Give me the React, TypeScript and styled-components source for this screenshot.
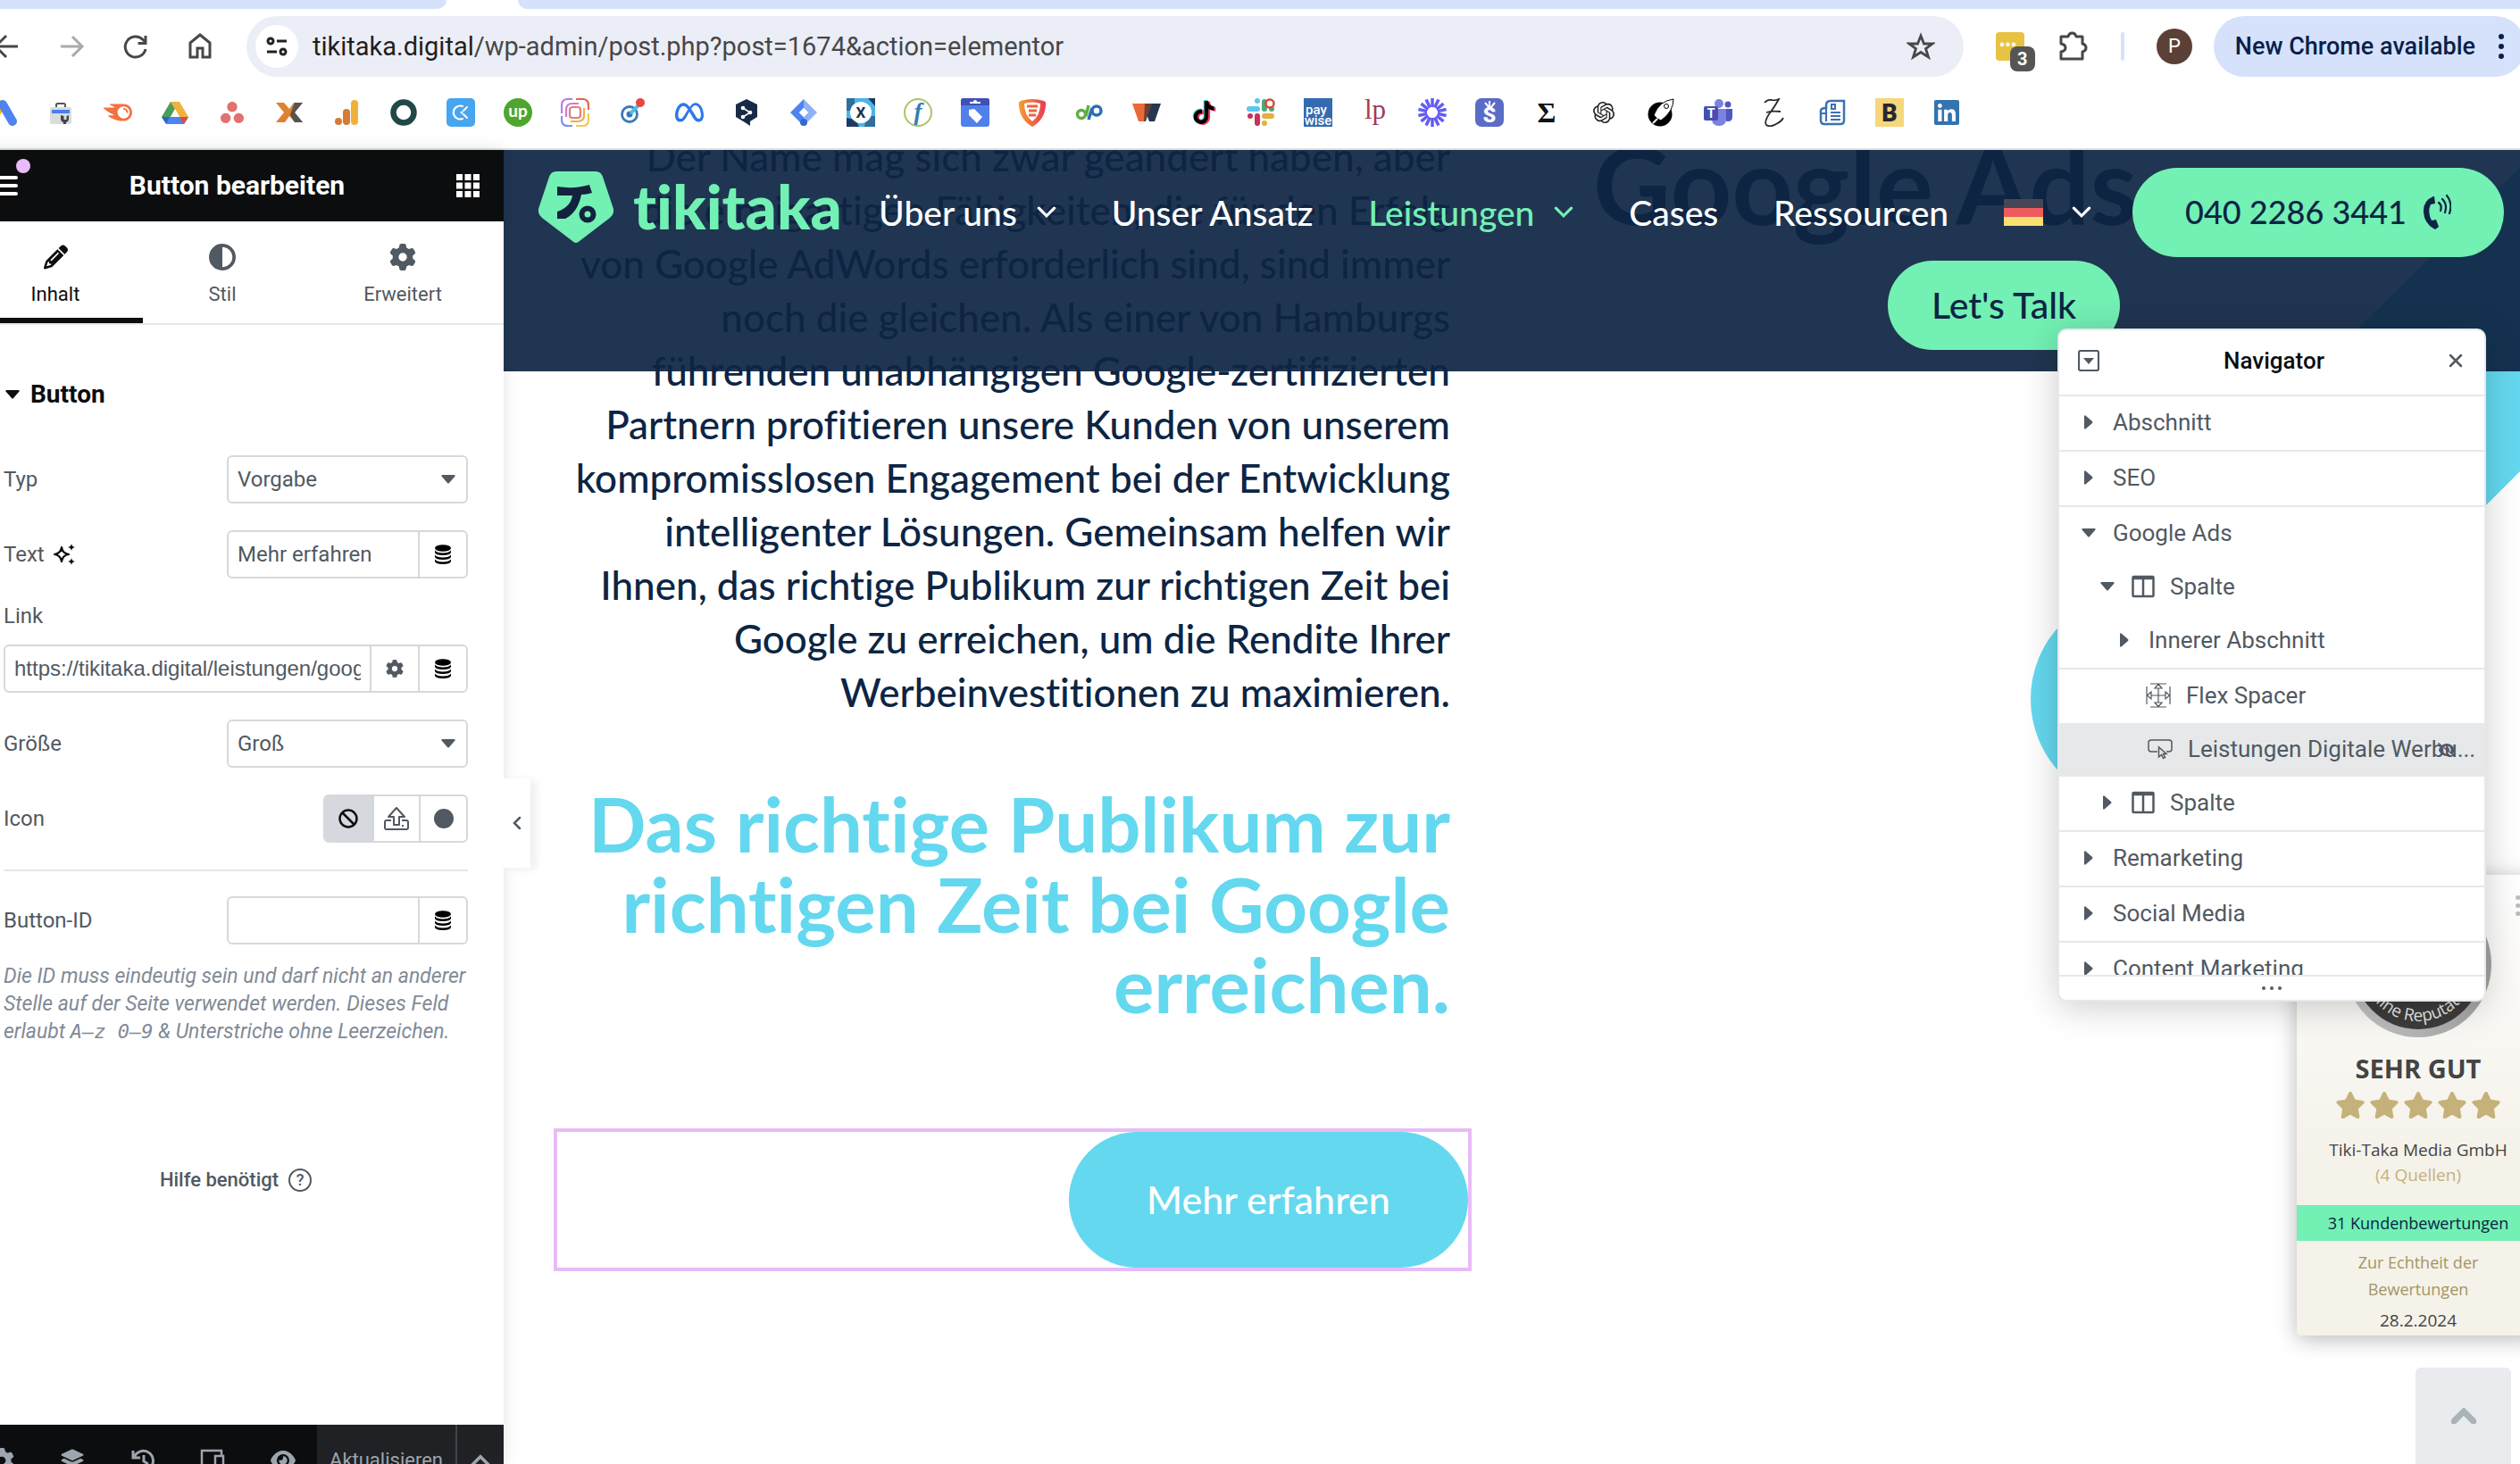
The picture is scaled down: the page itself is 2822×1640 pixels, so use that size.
import React from "react";
import styled, { createGlobalStyle, css } from "styled-components";
import {
  FaPencil, FaCircleHalfStroke, FaGear, FaLayerGroup,
  FaEye, FaEyeSlash, FaStar, FaTiktok, FaLinkedin, FaMeta,
} from "react-icons/fa6";
import { SiSemrush, SiAsana, SiOpenai } from "react-icons/si";

const ui = `Roboto, "Liberation Sans", sans-serif`;
const brand = `Lato, "Liberation Sans", sans-serif`;
const navy = "#0c2544";
const mint = "#73f0b4";
const cyan = "#64d8ef";
const slate = "#515962";
const line = "#d5d8dc";

const Global = createGlobalStyle`
  * { box-sizing: border-box; }
  html, body { margin: 0; padding: 0; background: #fff; overflow: hidden; }
  button, input, select { font: inherit; color: inherit; margin: 0; }
  button { border: 0; padding: 0; background: none; cursor: pointer; }
  a { color: inherit; text-decoration: none; }
  svg { display: block; flex: none; }
`;

const Window = styled.div`
  display: flex;
  flex-direction: column;
  height: 100vh;
  overflow: hidden;
`;

/* ---------- browser chrome ---------- */

const BrowserTop = styled.header`
  flex: none;
  font-family: ${ui};
  border-bottom: 2px solid #e1e3e1;
`;
const TabStrip = styled.div`
  display: flex;
  height: 10px;
  background: #fff;
`;
const TabPiece = styled.div<{ $grow?: boolean }>`
  height: 10px;
  background: #d6e2fb;
  ${(p) => p.$grow
    ? css`flex: 1; border-bottom-left-radius: 10px;`
    : css`width: 500px; border-bottom-right-radius: 10px;`}
`;
const ActiveTab = styled.div`width: 80px;`;
const Toolbar = styled.div`
  display: flex;
  align-items: center;
  height: 84px;
`;
const NavButtons = styled.div`
  display: flex;
  gap: 36px;
  margin-left: -10px;
  padding-right: 34px;
`;
const PlainButton = styled.button`
  display: flex;
  align-items: center;
  justify-content: center;
`;
const Address = styled.div`
  display: flex;
  align-items: center;
  flex: 1;
  height: 68px;
  padding: 0 32px 0 10px;
  gap: 16px;
  border-radius: 34px;
  background: #ebeef7;
`;
const SiteInfo = styled.span`
  display: flex;
  align-items: center;
  justify-content: center;
  width: 48px;
  height: 48px;
  border-radius: 50%;
  background: #fff;
`;
const Url = styled.span`
  flex: 1;
  font: 400 29px ${ui};
  color: #474747;
  b { font-weight: 400; color: #1f1f1f; }
`;
const ToolbarRight = styled.div`
  display: flex;
  align-items: center;
  margin-left: 36px;
  gap: 36px;
`;
const Extension = styled.span`
  position: relative;
  width: 32px;
  height: 32px;
  border-radius: 4px;
  background: #e8c341;
  color: #fff;
  font: 700 18px/30px ${ui};
  padding-left: 4px;
`;
const ExtensionCount = styled.span`
  position: absolute;
  left: 16px;
  top: 16px;
  width: 28px;
  height: 28px;
  border-radius: 8px;
  background: #555;
  font: 700 20px/28px ${ui};
  text-align: center;
`;
const ToolbarRule = styled.span`
  width: 4px;
  height: 32px;
  border-radius: 2px;
  background: #d6e2fb;
`;
const Avatar = styled.span`
  width: 40px;
  height: 40px;
  border-radius: 50%;
  background: #5b4037;
  color: #fff;
  font: 400 22px/40px ${ui};
  text-align: center;
`;
const UpdatePill = styled.button`
  display: flex;
  align-items: center;
  gap: 26px;
  height: 68px;
  padding: 0 24px;
  margin: 0 -6px 0 -12px;
  border-radius: 34px;
  background: #d6e2fb;
  color: #0a1f4b;
  font: 500 27px ${ui};
`;
const Bookmarks = styled.nav`
  display: flex;
  align-items: center;
  gap: 32px;
  height: 72px;
  margin-left: -12px;
  padding-bottom: 8px;
  a { width: 32px; height: 32px; display: block; flex: none; }
`;

/* ---------- editor panel ---------- */

const Workspace = styled.main`
  display: flex;
  flex: 1;
  min-height: 0;
`;
const Panel = styled.aside`
  position: relative;
  z-index: 3;
  display: flex;
  flex-direction: column;
  flex: none;
  width: 600px;
  margin-left: -36px;
  background: #fff;
  color: ${slate};
  font: 400 24px/30px ${ui};
  box-shadow: 0 0 16px rgba(0, 0, 0, 0.12);
`;
const PanelHeader = styled.div`
  position: relative;
  display: flex;
  align-items: center;
  justify-content: space-between;
  flex: none;
  height: 80px;
  padding: 0 27px 0 28px;
  background: #0c0d0e;
  color: #fff;
  h1 { margin: 0; font-size: 30px; font-weight: 700; }
`;
const NoticeDot = styled.span`
  position: absolute;
  left: 54px;
  top: 10px;
  width: 16px;
  height: 16px;
  border-radius: 50%;
  background: #eabafa;
`;
const Tabs = styled.div`
  display: grid;
  grid-template-columns: 196px 178px 1fr;
  flex: none;
  height: 116px;
  border-bottom: 2px solid #e6e8ea;
`;
const Tab = styled.button<{ $active?: boolean }>`
  display: flex;
  flex-direction: column;
  align-items: center;
  gap: 12px;
  padding-top: 25px;
  font-size: 22px;
  line-height: 30px;
  color: ${(p) => (p.$active ? "#0c0d0e" : slate)};
  border-bottom: 6px solid ${(p) => (p.$active ? "#0c0d0e" : "transparent")};
  svg { height: 30px; }
`;
const SectionToggle = styled.button`
  display: flex;
  align-items: center;
  gap: 12px;
  height: 60px;
  margin: 48px 0 38px 42px;
  font-weight: 700;
  font-size: 28px;
  color: #0c0d0e;
`;
const Controls = styled.form`
  display: flex;
  flex-direction: column;
  gap: 30px;
  padding: 0 40px;
`;
const Control = styled.div<{ $stacked?: boolean; $ruled?: boolean }>`
  display: flex;
  align-items: center;
  justify-content: space-between;
  ${(p) => p.$stacked && css`flex-direction: column; align-items: stretch; gap: 20px; line-height: 24px;`}
  ${(p) => p.$ruled && css`border-top: 2px solid #e6e8ea; padding-top: 28px;`}
`;
const LabelLine = styled.span`
  display: flex;
  align-items: center;
  gap: 10px;
`;
const Field = styled.div<{ $url?: boolean }>`
  position: relative;
  display: flex;
  width: ${(p) => (p.$url ? "100%" : "270px")};
  height: 54px;
  border: 2px solid ${line};
  border-radius: 6px;
  overflow: hidden;
  input, select {
    flex: 1;
    min-width: 0;
    height: 100%;
    border: 0;
    outline: 0;
    padding: 0 10px;
    background: transparent;
    appearance: none;
    ${(p) => p.$url && css`font-family: "Liberation Sans", Arial, sans-serif;`}
  }
`;
const SelectArrow = styled.span`
  position: absolute;
  right: 12px;
  top: 20px;
  pointer-events: none;
`;
const FieldButton = styled.button<{ $dark?: boolean; $on?: boolean }>`
  display: flex;
  align-items: center;
  justify-content: center;
  width: 54px;
  border-left: 2px solid ${line};
  color: ${(p) => (p.$dark ? "#000" : slate)};
  background: ${(p) => (p.$on ? line : "transparent")};
  &:first-child { border-left: 0; }
`;
const IconChoice = styled(Field)`width: 162px;`;
const Help = styled.p`
  margin: 20px 40px 0;
  font-size: 23px;
  line-height: 31px;
  font-style: italic;
  color: #818a96;
  white-space: nowrap;
  code { font-family: "DejaVu Sans Mono", monospace; font-size: 22px; line-height: 30px; }
`;
const NeedHelp = styled.a`
  display: flex;
  align-items: center;
  align-self: center;
  gap: 11px;
  margin-top: 136px;
  font-size: 22px;
  font-weight: 500;
`;
const HelpMark = styled.span`
  width: 26px;
  height: 26px;
  border: 2px solid ${slate};
  border-radius: 50%;
  font-size: 18px;
  line-height: 22px;
  text-align: center;
`;
const PanelFooter = styled.div`
  display: flex;
  flex: none;
  height: 80px;
  margin: auto 0 -36px;
  background: #0c0d0e;
  color: #9da5ae;
`;
const FooterTools = styled.div`
  display: flex;
  align-items: center;
  justify-content: space-between;
  flex: 1;
  padding: 0 24px;
`;
const Publish = styled.button<{ $arrow?: boolean }>`
  display: flex;
  align-items: center;
  justify-content: center;
  width: ${(p) => (p.$arrow ? "54px" : "155px")};
  border-left: ${(p) => (p.$arrow ? "2px solid #3f444b" : "0")};
  background: #1f2124;
  font-size: 22px;
`;
const CollapseTab = styled.button`
  position: absolute;
  left: 100%;
  top: 704px;
  width: 30px;
  height: 100px;
  display: flex;
  align-items: center;
  justify-content: center;
  background: #fff;
  box-shadow: 6px 2px 10px rgba(0, 0, 0, 0.07);
`;

/* ---------- page preview ---------- */

const Preview = styled.section`
  position: relative;
  flex: 1;
  min-width: 0;
  overflow: hidden;
  background: #fff;
  font-family: ${brand};
  font-variant-ligatures: none;
  color: ${navy};
`;
const Columns = styled.div`
  display: grid;
  grid-template-columns: 1028px 1fr;
  gap: 136px;
  margin: -23px 0 0 56px;
`;
const Lines = css`
  display: flex;
  flex-direction: column;
  align-items: flex-end;
  white-space: nowrap;
`;
const Copy = styled.div`
  p {
    ${Lines}
    margin: 0 24px 0 0;
    font-size: 44px;
    line-height: 60px;
    font-weight: 500;
  }
  h2 {
    ${Lines}
    margin: 72px 24px 0 0;
    font-size: 85px;
    line-height: 90px;
    font-weight: 700;
    color: ${cyan};
  }
`;
const SelectedWidget = styled.div`
  display: flex;
  justify-content: flex-end;
  margin-top: 117px;
  border: 4px solid #e8bbf7;
`;
const MoreLink = styled.a`
  display: flex;
  align-items: center;
  justify-content: center;
  width: 447px;
  height: 152px;
  padding-bottom: 2px;
  border-radius: 76px;
  background: ${cyan};
  color: #fff;
  font-size: 43px;
  font-weight: 500;
`;
const BigTitle = styled.h2`
  margin: 0;
  font-size: 120px;
  line-height: 122px;
  font-weight: 700;
  white-space: nowrap;
`;
const Shapes = styled.svg`
  position: absolute;
  right: 0;
  top: 0;
`;
const SiteHeader = styled.header`
  position: absolute;
  inset: 0 0 auto 0;
  height: 248px;
  padding: 20px 18px 0 39px;
  background: rgba(14, 37, 67, 0.925);
  color: #fff;
`;
const HeaderRow = styled.div<{ $second?: boolean }>`
  display: flex;
  align-items: center;
  ${(p) => p.$second && css`justify-content: flex-end; padding: 4px 430px 0 0;`}
`;
const Logo = styled.a`
  display: flex;
  align-items: center;
  gap: 22px;
  color: ${mint};
  font-size: 69px;
  line-height: 76px;
  font-weight: 900;
  margin-top: -12px;
`;
const Word = styled.span`
  width: 233px;
  padding-bottom: 2px;
  white-space: nowrap;
`;
const Menu = styled.nav`
  display: flex;
  flex: 1;
  justify-content: space-between;
  margin: 0 46px 0 42px;
  font-size: 39px;
  font-weight: 500;
  white-space: nowrap;
`;
const MenuItem = styled.a<{ $active?: boolean; $wide?: boolean }>`
  display: flex;
  align-items: center;
  gap: ${(p) => (p.$wide ? "32px" : "22px")};
  color: ${(p) => (p.$active ? mint : "#fff")};
`;
const Flag = styled.span`
  display: grid;
  grid-template-rows: repeat(3, 10px);
  width: 44px;
  i:nth-child(1) { background: #474655; }
  i:nth-child(2) { background: #ee5a5d; }
  i:nth-child(3) { background: #fae072; }
`;
const Pill = styled.a<{ $phone?: boolean }>`
  display: flex;
  align-items: center;
  justify-content: center;
  gap: 18px;
  width: ${(p) => (p.$phone ? "416px" : "260px")};
  height: 100px;
  padding-bottom: 2px;
  border-radius: 50px;
  background: ${mint};
  color: ${navy};
  font-size: ${(p) => (p.$phone ? "36px" : "41px")};
  font-weight: 500;
  white-space: nowrap;
`;

/* ---------- floating items ---------- */

const Navigator = styled.section`
  position: absolute;
  right: 38px;
  top: 200px;
  width: 480px;
  height: 754px;
  display: flex;
  flex-direction: column;
  border: 2px solid #e6e8ea;
  border-radius: 10px;
  background: #fff;
  color: ${slate};
  font: 400 26px/30px ${ui};
  box-shadow: 0 6px 40px rgba(0, 0, 0, 0.2);
  overflow: hidden;
`;
const NavigatorHead = styled.div`
  display: flex;
  align-items: center;
  justify-content: space-between;
  height: 72px;
  padding: 0 24px 4px 21px;
  h2 { margin: 0; font-size: 26px; font-weight: 500; color: #0c0d0e; }
`;
const Tree = styled.ul`
  flex: 1;
  min-height: 0;
  overflow: hidden;
  margin: 0;
  padding: 0;
  list-style: none;
`;
const TreeRow = styled.li<{ $indent: number; $line?: boolean; $selected?: boolean }>`
  position: relative;
  display: flex;
  align-items: center;
  height: ${(p) => (p.$line ? "62px" : "60px")};
  padding-left: ${(p) => p.$indent}px;
  padding-bottom: 2px;
  border-top: ${(p) => (p.$line ? "2px solid #e6e8ea" : "0")};
  background: ${(p) => (p.$selected ? "#e6e8ea" : "transparent")};
  white-space: nowrap;
`;
const Twisty = styled.span`
  display: flex;
  justify-content: center;
  width: 20px;
  margin-right: 17px;
`;
const RowIcon = styled.span`margin-right: 17px;`;
const HiddenMark = styled.span`
  position: absolute;
  right: 32px;
  top: 20px;
`;
const NavigatorFoot = styled.div`
  display: flex;
  align-items: center;
  justify-content: center;
  gap: 5px;
  height: 28px;
  border-top: 2px solid #e6e8ea;
  i { width: 4px; height: 4px; border-radius: 50%; background: ${slate}; }
`;
const Rating = styled.aside`
  position: absolute;
  right: -22px;
  top: 812px;
  width: 272px;
  height: 516px;
  display: flex;
  flex-direction: column;
  align-items: center;
  border-radius: 6px;
  background: linear-gradient(#fff, #f5f2ea 60%);
  box-shadow: 0 4px 24px rgba(0, 0, 0, 0.28);
  color: #444;
  font: 400 19px/28px "Open Sans", "Noto Sans", sans-serif;
  text-align: center;
`;
const Seal = styled.svg`margin-top: 18px;`;
const Verdict = styled.strong`
  font-size: 29px;
  line-height: 36px;
  font-weight: 700;
  margin-top: 17px;
`;
const Stars = styled.div`
  display: flex;
  gap: 4px;
  margin: 6px 0 19px;
  color: #c5b17a;
`;
const Gold = styled.span`color: #c5b17a;`;
const Reviews = styled.a`
  align-self: stretch;
  height: 40px;
  margin: 20px 0 9px;
  background: ${mint};
  color: ${navy};
  font-size: 18px;
  line-height: 40px;
`;
const Proof = styled.a`
  width: 160px;
  color: #a39563;
  font-size: 18px;
  line-height: 30px;
`;
const RatingDate = styled.span`margin-top: 6px;`;
const Grip = styled.span`
  position: absolute;
  left: 245px;
  top: 23px;
  display: grid;
  gap: 4px;
  i { width: 6px; height: 5px; border-radius: 50%; background: #bbb; }
`;
const ToTop = styled.button`
  position: absolute;
  right: 10px;
  bottom: 0;
  width: 107px;
  height: 108px;
  display: flex;
  align-items: center;
  justify-content: center;
  border-radius: 6px 6px 0 0;
  background: #eaebef;
`;

/* ---------- small drawings ---------- */

type GlyphProps = { size?: number; box?: string; children: React.ReactNode };
const Glyph = ({ size = 32, box = "0 0 32 32", children }: GlyphProps) => (
  <svg width={size} height={size} viewBox={box} fill="none" aria-hidden="true">{children}</svg>
);

const Chevron = ({ w, dir, color, stroke = 3 }: { w: number; dir: "up" | "down" | "left"; color: string; stroke?: number }) => (
  <svg width={dir === "left" ? 10 : w} height={dir === "left" ? 16 : Math.round(w * 0.65)}
    viewBox={dir === "left" ? "0 0 10 16" : "0 0 20 13"} fill="none" stroke={color} strokeWidth={stroke} strokeLinecap="round">
    <path d={dir === "down" ? "M2 2l8 8 8-8" : dir === "up" ? "M2 11l8-8 8 8" : "M8 2L2 8l6 6"} />
  </svg>
);

const Caret = ({ open = true }: { open?: boolean }) =>
  open ? (
    <svg width="16" height="10" viewBox="0 0 16 10"><path d="M1 0h14q1 .5.5 1.500L9 9q-1 1-2 0L.5 1.500Q0 .5 1 0z" fill="currentColor" /></svg>
  ) : (
    <svg width="10" height="16" viewBox="0 0 10 16"><path d="M0 1v14q.5 1 1.500.5L9 9q1-1 0-2L1.500.5Q.5 0 0 1z" fill="currentColor" /></svg>
  );

const Discs = () => (
  <svg width="18" height="22" viewBox="0 0 18 22" fill="#000">
    <ellipse cx="9" cy="4" rx="9" ry="3.800" />
    <path d="M0 6.500q2 3 9 3t9-3v2.500q-1 3-9 3t-9-3zM0 11.500q2 3 9 3t9-3V14q-1 3-9 3t-9-3zM0 16.500q2 3 9 3t9-3v2.500q-1 3-9 3t-9-3z" />
  </svg>
);

const ColumnIcon = () => (
  <svg width="26" height="26" viewBox="0 0 26 26" fill="none" stroke="currentColor" strokeWidth="2.500">
    <rect x="1.500" y="2" width="23" height="22" rx="1" /><path d="M13 3v21M1 4h24" />
  </svg>
);
const SpacerIcon = () => (
  <svg width="28" height="28" viewBox="0 0 28 28" fill="none" stroke="currentColor" strokeWidth="1.200">
    <path d="M1 4v20M27 4v20M5 1h18M5 27h18M6 14h16M14 6v16M6 10L1.500 14 6 18zM22 10l4.500 4-4.500 4zM10 6l4-4.500L18 6zM10 22l4 4.500 4-4.500z" />
  </svg>
);
const ButtonIcon = () => (
  <svg width="28" height="24" viewBox="0 0 28 24" fill="none" stroke="currentColor" strokeWidth="1.500">
    <path d="M11 15H4q-3 0-3-3V5q0-3 3-3h20q3 0 3 3v7q0 3-3 3h-3" />
    <path d="M12.500 10v11l3-2.500 2 4 2-1-2-4h3.500z" fill="#e6e8ea" />
  </svg>
);
const CrossIcon = () => (
  <svg width="16" height="16" viewBox="0 0 16 16" stroke={slate} strokeWidth="2.500" strokeLinecap="round"><path d="M2 2l12 12M14 2L2 14" /></svg>
);

const letter = (t: string, x: number, y: number, size: number, fill: string, family: string, weight = 700, italic = false) => (
  <text x={x} y={y} fontSize={size} fill={fill} fontFamily={family} fontWeight={weight} fontStyle={italic ? "italic" : "normal"} textAnchor="middle">{t}</text>
);

const bookmarks: [string, React.ReactNode][] = [
  ["Ads", <Glyph><path d="M13 7L4 26" stroke="#fbbc04" strokeWidth="9" strokeLinecap="round" /><path d="M15 7l11 19" stroke="#4f84ee" strokeWidth="10" strokeLinecap="round" /></Glyph>],
  ["Tools", <Glyph><path d="M11 11V7.500q0-1.500 1.500-1.500h7q1.500 0 1.500 1.500V11" stroke="#555" strokeWidth="2" /><rect x="4" y="10" width="24" height="19" rx="2" fill="#d9dcdf" /><path d="M6 13h20v4H6z" fill="#4880ee" /><path d="M16 19v4q0 3 3 4v2h3v-2q3-1 3-4v-4l-2.500 1v4h-3v-4z" fill="#444" /></Glyph>],
  ["Semrush", <SiSemrush size={32} color="#f4703f" />],
  ["Drive", <Glyph><path d="M11 4h10L11 21l-4 8-6-8z" fill="#4b9e5a" /><path d="M11 4h10l10 17H21z" fill="#f0b23c" /><path d="M9 21h22l-5 8H6z" fill="#4f84ee" /><path d="M21 21h10l-5 8z" fill="#dd4b3e" /><path d="M1 21h9l-4 8z" fill="#2c62cc" /><path d="M16 12l5 9H11z" fill="#fff" /></Glyph>],
  ["Asana", <SiAsana size={26} color="#e2716f" style={{ margin: 3 }} />],
  ["X", <Glyph><path d="M1 5h9l6 7 5-7h10l-9 11 9 11h-9l-6-7-5 7H1l9-11z" fill="#de8130" /><path d="M22 5h9l-9 11 9 11h-9l-5-8 2-6z" fill="#565350" /></Glyph>],
  ["Analytics", <Glyph><rect x="21" y="2" width="8" height="28" rx="4" fill="#f0b03c" /><rect x="12" y="12" width="8" height="18" rx="4" fill="#d57b35" /><circle cx="7" cy="26" r="4" fill="#d57b35" /></Glyph>],
  ["Ring", <Glyph><circle cx="16" cy="16" r="11.500" stroke="#214746" strokeWidth="6.500" /></Glyph>],
  ["Clockify", <Glyph><rect width="32" height="32" rx="5" fill="#48a5f0" /><path d="M18 9a7.500 7.500 0 1 0 0 14" stroke="#fff" strokeWidth="2" strokeLinecap="round" /><path d="M19 14l4-4M19 18l4 4" stroke="#fff" strokeWidth="2" strokeLinecap="round" /><circle cx="17" cy="16" r="1.500" fill="#fff" /></Glyph>],
  ["Upwork", <Glyph><circle cx="16" cy="16" r="16" fill="#4ea62f" />{letter("up", 16, 21, 19, "#fff", brand)}</Glyph>],
  ["Frames", <Glyph><g strokeWidth="2.200"><path d="M13 1H8Q1 1 1 8v9" stroke="#b57bea" /><path d="M17 1h7q7 0 7 7v5" stroke="#e0664e" /><path d="M1 20v4q0 7 7 7h5" stroke="#7f90ea" /><path d="M31 17v7q0 7-7 7h-7" stroke="#eecb54" /><path d="M20 6h-7q-7 0-7 7v8" stroke="#cf7bd3" /><path d="M11 26h8q7 0 7-7v-8" stroke="#eeb04b" /><rect x="10" y="10" width="12" height="12" rx="3" stroke="#e0807a" /></g></Glyph>],
  ["Target", <Glyph><circle cx="13" cy="18" r="8.500" stroke="#3e78b7" strokeWidth="2.800" /><circle cx="13" cy="18" r="3.500" fill="#3478c0" /><path d="M14 17L23 8" stroke="#4cc0e4" strokeWidth="4" /><circle cx="25" cy="5" r="5" fill="#ea4641" /></Glyph>],
  ["Meta", <FaMeta size={32} color="#2e78ea" />],
  ["DeepL", <Glyph><path d="M16 1l12 6v14l-8 5v5l-6-4L4 21V7z" fill="#182b46" /><path d="M12 11l8 5-8 5" stroke="#fff" strokeWidth="1.500" /><circle cx="12" cy="11" r="2.300" fill="#fff" /><circle cx="20" cy="16" r="2.300" fill="#fff" /><circle cx="12" cy="21" r="2.300" fill="#fff" /></Glyph>],
  ["Studio", <Glyph><path d="M16 1l15 15-15 15V21l5-5-5-5z" fill="#8fb2f6" /><path d="M16 1L1 16l15 15V21l-5-5 5-5z" fill="#4f84ee" /><circle cx="16" cy="27" r="4" fill="#3367d6" /><path d="M16 11l5 5-5 5-5-5z" fill="#fff" /></Glyph>],
  ["Xing", <Glyph><path d="M0 0h32v32H0z" fill="#4bb4e8" /><path d="M0 0h9v14H0zM22 20h10v12H20z" fill="#2d6f9f" /><path d="M0 22l10 2 4 8H0zM24 0h8v9z" fill="#1d3a62" /><circle cx="16" cy="16" r="12" fill="#fff" />{letter("X", 16, 22, 17, "#17324f", ui)}</Glyph>],
  ["f", <Glyph><circle cx="16" cy="16" r="15" stroke="#a9c565" strokeWidth="2" />{letter("f", 16, 24, 27, "#2f7eb6", `"Liberation Serif", serif`, 700, true)}</Glyph>],
  ["Tag", <Glyph><rect width="32" height="32" rx="3" fill="#5180ea" /><path d="M0 8V3q0-3 3-3h26q3 0 3 3v5z" fill="#3f51b5" /><path d="M10 5h12" stroke="#fff" strokeWidth="2" /><circle cx="16" cy="4" r="2" fill="#fff" /><path d="M9 13l6-1 9 9-6 7-9-9z" fill="#fff" /></Glyph>],
  ["Shield", <Glyph><defs><linearGradient id="sh"><stop stopColor="#f3a02e" /><stop offset="1" stopColor="#e93a58" /></linearGradient></defs><path d="M3 3q13-4 26 0 3 1 2 5-1 16-15 24Q2 24 1 8 0 4 3 3z" fill="url(#sh)" /><path d="M7 6q9-3 18 0 0 13-9 20Q7 19 7 6z" fill="#fff" /><path d="M10 9h12M12 14h9M12 19h8" stroke="#ee6440" strokeWidth="2.800" /></Glyph>],
  ["dp", <Glyph><circle cx="7" cy="18" r="4.500" stroke="#62ad45" strokeWidth="3.500" /><path d="M12 20l3-12" stroke="#62ad45" strokeWidth="3.500" /><circle cx="24" cy="14" r="5" stroke="#2c6cb4" strokeWidth="3.500" /><path d="M19 11l-4 13" stroke="#2c6cb4" strokeWidth="3.500" /></Glyph>],
  ["W", <Glyph><path d="M21 6h11l-7 20h-6l-3-8z" fill="#26374f" /><path d="M0 6h14l3 10-4 10H7z" fill="#ea6a36" /><path d="M14 6h8l-7 20h-2z" fill="#6a4038" /></Glyph>],
  ["TikTok", <FaTiktok size={26} color="#000" style={{ margin: 3, filter: "drop-shadow(2px 1px 0 #ee3b5b) drop-shadow(-1px -1px 0 #59dfe0)" }} />],
  ["Slack", <Glyph><g strokeWidth="6" strokeLinecap="round"><path d="M12 3v0M3 12h9" stroke="#5fc5ee" /><path d="M20 4v8M28 12v0" stroke="#49ab7c" /><path d="M20 20h8M20 28v0" stroke="#e3b13f" /><path d="M12 20v8M4 20v0" stroke="#cb3059" /></g><circle cx="26" cy="6" r="4.500" fill="#fff" stroke="#d94734" strokeWidth="2.500" /></Glyph>],
  ["paywise", <Glyph><path d="M0 0h32v32H0z" fill="#346bb0" />{letter("pay", 14, 18, 15, "#fff", ui, 500)}{letter("wise", 16, 30, 15, "#fff", ui, 500)}</Glyph>],
  ["lp", <Glyph>{letter("lp", 16, 23, 31, "#a33a56", `"Liberation Serif", serif`, 400)}</Glyph>],
  ["Burst", <Glyph><g stroke="#635cf0" strokeWidth="3.500">{Array.from({ length: 7 }, (_, i) => <path key={i} d="M16 0v10M16 22v10" transform={`rotate(${(i * 180) / 7} 16 16)`} />)}</g></Glyph>],
  ["S", <Glyph><rect width="32" height="32" rx="7" fill="#5a6cc6" />{letter("S", 16, 27, 23, "#fff", ui, 900)}<path d="M16 11l-5-6M16 10V3M17 11l5-6" stroke="#fff" strokeWidth="2" /></Glyph>],
  ["Sigma", <Glyph>{letter("Σ", 16, 27, 32, "#111", `"Liberation Serif", serif`)}</Glyph>],
  ["OpenAI", <SiOpenai size={24} color="#222" style={{ margin: 4 }} />],
  ["Rocket", <Glyph><circle cx="15" cy="18" r="13.500" fill="#000" /><path d="M8 19Q14 3 30 1q0 14-14 24l-4-2z" fill="#fff" stroke="#000" /><circle cx="22" cy="9" r="2.500" stroke="#000" /><path d="M12 23l-5 5" stroke="#fff" strokeWidth="2" /></Glyph>],
  ["Teams", <Glyph><circle cx="17" cy="6" r="5" fill="#7b83e0" /><circle cx="27" cy="7" r="3.500" fill="#5058c0" /><path d="M22 12h10v9q0 5-5 5-4 0-5-3z" fill="#5058c0" /><path d="M9 12h16v11q0 8-8 8t-8-8z" fill="#7b83e0" /><rect y="9" width="16" height="16" rx="2" fill="#464fb4" />{letter("T", 8, 22, 14, "#fff", ui)}</Glyph>],
  ["Z", <Glyph><path d="M4 5q3-4 8-3 4 1 8-1-5 9-9 14-8 11-5 15 4 3 11-1 6-3 8-7M6 16q7-2 16-1" stroke="#2a2a2a" strokeWidth="1.800" /></Glyph>],
  ["News", <Glyph><path d="M9 8q0-5 5-5h15v22q0 4-4 4H7q-4 0-4-4V14q0-3 6-3z" stroke="#3c72b0" strokeWidth="2.500" /><path d="M9 8v18M14 16h11M14 20h11M14 24h11M4 17h5" stroke="#3c72b0" strokeWidth="2.200" /><path d="M15 7h4v5h-4z" stroke="#3c72b0" strokeWidth="2" /></Glyph>],
  ["B", <Glyph><path d="M0 0h32v32H0z" fill="#f6d77c" />{letter("B", 16, 26, 27, "#262a2f", ui, 900)}</Glyph>],
  ["LinkedIn", <FaLinkedin size={32} color="#3273b0" />],
];

const tree: { label: string; indent: number; line?: boolean; open?: boolean; leaf?: boolean; icon?: React.ReactNode; selected?: boolean }[] = [
  { label: "Abschnitt", indent: 23, line: true },
  { label: "SEO", indent: 23, line: true },
  { label: "Google Ads", indent: 23, line: true, open: true },
  { label: "Spalte", indent: 44, open: true, icon: <ColumnIcon /> },
  { label: "Innerer Abschnitt", indent: 63 },
  { label: "Flex Spacer", indent: 97, line: true, leaf: true, icon: <SpacerIcon /> },
  { label: "Leistungen Digitale Werbu...", indent: 99, leaf: true, icon: <ButtonIcon />, selected: true },
  { label: "Spalte", indent: 44, icon: <ColumnIcon /> },
  { label: "Remarketing", indent: 23, line: true },
  { label: "Social Media", indent: 23, line: true },
  { label: "Content Marketing", indent: 23, line: true },
];

const copyLines = [
  "Der Name mag sich zwar geändert haben, aber",
  "die einzigartigen Fähigkeiten, die für den Erfolg",
  "von Google AdWords erforderlich sind, sind immer",
  "noch die gleichen. Als einer von Hamburgs",
  "führenden unabhängigen Google-zertifizierten",
  "Partnern profitieren unsere Kunden von unserem",
  "kompromisslosen Engagement bei der Entwicklung",
  "intelligenter Lösungen. Gemeinsam helfen wir",
  "Ihnen, das richtige Publikum zur richtigen Zeit bei",
  "Google zu erreichen, um die Rendite Ihrer",
  "Werbeinvestitionen zu maximieren.",
];

const BrowserChrome = () => (
  <BrowserTop>
    <TabStrip>
      <TabPiece /><ActiveTab /><TabPiece $grow />
    </TabStrip>
    <Toolbar>
      <NavButtons>
        <PlainButton aria-label="Zurück"><Glyph size={36} box="0 0 36 36"><path d="M30 18H6M17 6L5 18l12 12" stroke="#474747" strokeWidth="3" /></Glyph></PlainButton>
        <PlainButton aria-label="Vor"><Glyph size={36} box="0 0 36 36"><path d="M6 18h23M19 7l11 11-11 11" stroke="#aaa" strokeWidth="3" /></Glyph></PlainButton>
        <PlainButton aria-label="Neu laden"><Glyph size={36} box="0 0 36 36"><path d="M29 21a11.500 11.500 0 1 1-3-10.500L29 13" stroke="#474747" strokeWidth="3" /><path d="M29 6v8.500H20.500" stroke="#474747" strokeWidth="3" /></Glyph></PlainButton>
        <PlainButton aria-label="Startseite"><Glyph size={36} box="0 0 36 36"><path d="M7 30V14L18 5l11 9v16h-8V20h-6v10z" stroke="#474747" strokeWidth="3" /></Glyph></PlainButton>
      </NavButtons>
      <Address>
        <SiteInfo><Glyph size={28} box="0 0 28 28"><g stroke="#222" strokeWidth="3"><circle cx="7" cy="8" r="3" /><path d="M14 8h11M3 20h11" /><circle cx="21" cy="20" r="3" /></g></Glyph></SiteInfo>
        <Url><b>tikitaka.digital</b>/wp-admin/post.php?post=1674&amp;action=elementor</Url>
        <PlainButton aria-label="Lesezeichen"><Glyph><path d="M16 4l3.500 9H29l-7.500 5.500 3 9.500L16 22.500 7.500 28l3-9.500L3 13h9.500z" stroke="#474747" strokeWidth="2.800" /></Glyph></PlainButton>
      </Address>
      <ToolbarRight>
        <Extension>•••<ExtensionCount>3</ExtensionCount></Extension>
        <PlainButton aria-label="Erweiterungen"><Glyph size={36} box="0 0 36 36"><path d="M5 7h8q1-4 4.500-4T22 7h7v8q4 1 4 4.500T29 24v8H5v-8q5-1 5-4.500T5 15z" stroke="#474747" strokeWidth="3" strokeLinejoin="round" /></Glyph></PlainButton>
        <ToolbarRule />
        <Avatar>P</Avatar>
        <UpdatePill>New Chrome available<svg width="6" height="30" viewBox="0 0 6 30" fill="#0a1f4b"><circle cx="3" cy="4" r="3" /><circle cx="3" cy="15" r="3" /><circle cx="3" cy="26" r="3" /></svg></UpdatePill>
      </ToolbarRight>
    </Toolbar>
    <Bookmarks aria-label="Lesezeichenleiste">
      {bookmarks.map(([name, icon]) => <a key={name} href="#" aria-label={name}>{icon}</a>)}
    </Bookmarks>
  </BrowserTop>
);

const DynamicButton = () => <FieldButton type="button" $dark aria-label="Dynamisch"><Discs /></FieldButton>;

const EditorPanel = () => (
  <Panel>
    <PanelHeader>
      <PlainButton aria-label="Menü"><svg width="28" height="24" viewBox="0 0 28 24" stroke="#fff" strokeWidth="4" strokeLinecap="round"><path d="M2 3h24M2 12h24M2 21h24" /></svg></PlainButton>
      <NoticeDot />
      <h1>Button bearbeiten</h1>
      <PlainButton aria-label="Widgets">
        <svg width="26" height="26" viewBox="0 0 26 26" fill="#fff"><path d="M0 0h7v7H0zM9.500 0h7v7h-7zM19 0h7v7h-7zM0 9.500h7v7H0zM9.500 9.500h7v7h-7zM19 9.500h7v7h-7zM0 19h7v7H0zM9.500 19h7v7h-7zM19 19h7v7h-7z" /></svg>
      </PlainButton>
    </PanelHeader>
    <Tabs>
      <Tab $active><FaPencil size={27} />Inhalt</Tab>
      <Tab><FaCircleHalfStroke size={30} />Stil</Tab>
      <Tab><FaGear size={30} />Erweitert</Tab>
    </Tabs>
    <SectionToggle><Caret />Button</SectionToggle>
    <Controls>
      <Control>
        <label htmlFor="typ">Typ</label>
        <Field><select id="typ" defaultValue="Vorgabe"><option>Vorgabe</option></select><SelectArrow><Caret /></SelectArrow></Field>
      </Control>
      <Control>
        <LabelLine><label htmlFor="text">Text</label>
          <svg width="24" height="24" viewBox="0 0 24 24"><path d="M9 4q1 7 8 8-7 1-8 8-1-7-8-8 7-1 8-8z" fill="none" stroke="#0c0d0e" strokeWidth="2.200" strokeLinejoin="round" /><path d="M20 0q.5 3.500 4 4-3.500.5-4 4-.5-3.500-4-4 3.500-.5 4-4zM20 16q.5 3.500 4 4-3.500.5-4 4-.5-3.500-4-4 3.500-.5 4-4z" fill="#0c0d0e" /></svg>
        </LabelLine>
        <Field><input id="text" defaultValue="Mehr erfahren" /><DynamicButton /></Field>
      </Control>
      <Control $stacked>
        <label htmlFor="link">Link</label>
        <Field $url><input id="link" defaultValue="https://tikitaka.digital/leistungen/google-ads" /><FieldButton type="button" aria-label="Optionen"><FaGear size={20} /></FieldButton><DynamicButton /></Field>
      </Control>
      <Control>
        <label htmlFor="size">Größe</label>
        <Field><select id="size" defaultValue="Groß"><option>Groß</option></select><SelectArrow><Caret /></SelectArrow></Field>
      </Control>
      <Control>
        <span id="icon-label">Icon</span>
        <IconChoice role="group" aria-labelledby="icon-label">
          <FieldButton type="button" $dark $on aria-label="Kein Icon"><svg width="22" height="22" viewBox="0 0 22 22" fill="none" stroke="#0c0d0e" strokeWidth="2.500"><circle cx="11" cy="11" r="9.500" /><path d="M4.500 4.500l13 13" /></svg></FieldButton>
          <FieldButton type="button" aria-label="SVG hochladen"><svg width="28" height="26" viewBox="0 0 28 26" fill="none" stroke={slate} strokeWidth="2" strokeLinejoin="round"><path d="M8 15H3q-2 0-2 2v6q0 2 2 2h22q2 0 2-2v-6q0-2-2-2h-5" /><path d="M11 20v-9H5l9-10 9 10h-6v9z" /><path d="M20 21h2" /></svg></FieldButton>
          <FieldButton type="button" aria-label="Bibliothek"><svg width="22" height="22" viewBox="0 0 22 22"><circle cx="11" cy="11" r="11" fill={slate} /></svg></FieldButton>
        </IconChoice>
      </Control>
      <Control $ruled>
        <label htmlFor="bid">Button-ID</label>
        <Field><input id="bid" /><DynamicButton /></Field>
      </Control>
    </Controls>
    <Help>
      Die ID muss eindeutig sein und darf nicht an anderer<br />
      Stelle auf der Seite verwendet werden. Dieses Feld<br />
      erlaubt <code>A–z 0–9</code> &amp; Unterstriche ohne Leerzeichen.
    </Help>
    <NeedHelp href="#">Hilfe benötigt<HelpMark>?</HelpMark></NeedHelp>
    <PanelFooter>
      <FooterTools>
        <PlainButton aria-label="Einstellungen"><FaGear size={28} /></PlainButton>
        <PlainButton aria-label="Struktur"><FaLayerGroup size={28} /></PlainButton>
        <PlainButton aria-label="Verlauf"><svg width="28" height="28" viewBox="0 0 28 28" fill="none" stroke="currentColor" strokeWidth="3"><path d="M3 3v8h8M4 11A11 11 0 1 1 5 20M15 8v7l5 3" /></svg></PlainButton>
        <PlainButton aria-label="Responsiv"><svg width="28" height="28" viewBox="0 0 28 28" fill="none" stroke="currentColor" strokeWidth="2.500"><path d="M24 8V3H2v17h12M9 24h5" /><rect x="17" y="9" width="9" height="16" /></svg></PlainButton>
        <PlainButton aria-label="Vorschau"><FaEye size={28} /></PlainButton>
      </FooterTools>
      <Publish>Aktualisieren</Publish>
      <Publish $arrow aria-label="Optionen"><Chevron w={24} dir="up" color="#9da5ae" stroke={3} /></Publish>
    </PanelFooter>
    <CollapseTab aria-label="Panel einklappen"><Chevron w={10} dir="left" color={slate} stroke={2.5} /></CollapseTab>
  </Panel>
);

const SitePreview = () => (
  <Preview>
    <Shapes width="600" height="1000" viewBox="0 0 600 1000" fill={cyan}>
      <path d="M600 19L278 341v340h0L600 360z" />
      <circle cx="172" cy="615" r="120" />
    </Shapes>
    <Columns>
      <Copy>
        <p>{copyLines.map((t) => <span key={t}>{t}</span>)}</p>
        <h2><span>Das richtige Publikum zur</span><span>richtigen Zeit bei Google</span><span>erreichen.</span></h2>
        <SelectedWidget><MoreLink href="#">Mehr erfahren</MoreLink></SelectedWidget>
      </Copy>
      <BigTitle>Google Ads</BigTitle>
    </Columns>
    <SiteHeader>
      <HeaderRow>
        <Logo href="#">
          <svg width="84" height="80" viewBox="0 0 84 80">
            <path d="M20 0h44q6 0 8 6l12 36q1 6-4 10L46 78q-4 4-8 0L4 52q-5-4-4-10L12 6q2-6 8-6z" fill={mint} />
            <path d="M21 17q20 3 36-2l3 9q-6 2-12 2-4 20-18 27h-9v-8q15-5 17-18H21z" fill="#12223f" />
            <circle cx="55" cy="48" r="6.500" fill="none" stroke="#12223f" strokeWidth="6" />
          </svg>
          <Word>tikitaka</Word>
        </Logo>
        <Menu>
          <MenuItem href="#">Über uns<Chevron w={22} dir="down" color="#fff" /></MenuItem>
          <MenuItem href="#">Unser Ansatz</MenuItem>
          <MenuItem href="#" $active>Leistungen<Chevron w={22} dir="down" color={mint} /></MenuItem>
          <MenuItem href="#">Cases</MenuItem>
          <MenuItem href="#">Ressourcen</MenuItem>
          <MenuItem href="#" $wide aria-label="Deutsch"><Flag><i /><i /><i /></Flag><Chevron w={22} dir="down" color="#fff" /></MenuItem>
        </Menu>
        <Pill href="#" $phone>040 2286 3441
          <svg width="32" height="40" viewBox="0 0 32 40" fill="none" stroke={navy} strokeLinecap="round">
            <path d="M12 3Q0 8 1 21t13 19l4-3-3-8-5 1Q5 20 9 12l5-1-1-8z" fill={navy} stroke="none" />
            <path d="M18 10q4 3 2 9M22 6q6 6 3 15M27 2q7 9 3 20" strokeWidth="2.200" />
          </svg>
        </Pill>
      </HeaderRow>
      <HeaderRow $second><Pill href="#">Let's Talk</Pill></HeaderRow>
    </SiteHeader>

    <Rating>
      <Grip><i /><i /><i /></Grip>
      <Seal width="164" height="164" viewBox="0 0 164 164">
        <defs><linearGradient id="rim"><stop stopColor="#c4c4c4" /><stop offset="1" stopColor="#a2a2a2" /></linearGradient></defs>
        <circle cx="82" cy="82" r="82" fill="url(#rim)" />
        <circle cx="82" cy="82" r="73" fill="#3c3c3c" />
        <path id="arc" d="M18 82a64 64 0 0 0 128 0" fill="none" />
        <text fontSize="19" fill="#e6e6e6" fontFamily="Open Sans" textAnchor="middle"><textPath href="#arc" startOffset="50%">Online Reputation</textPath></text>
      </Seal>
      <Verdict>SEHR GUT</Verdict>
      <Stars>{[0, 1, 2, 3, 4].map((i) => <FaStar key={i} size={34} />)}</Stars>
      <span>Tiki-Taka Media GmbH</span>
      <Gold>(4 Quellen)</Gold>
      <Reviews href="#">31 Kundenbewertungen</Reviews>
      <Proof href="#">Zur Echtheit der Bewertungen</Proof>
      <RatingDate>28.2.2024</RatingDate>
    </Rating>

    <Navigator>
      <NavigatorHead>
        <PlainButton aria-label="Alle einklappen"><svg width="24" height="24" viewBox="0 0 24 24" fill="none"><rect x="1" y="1" width="22" height="22" rx="2" stroke={slate} strokeWidth="2.200" /><path d="M6 9h12l-6 7z" fill={slate} /></svg></PlainButton>
        <h2>Navigator</h2>
        <PlainButton aria-label="Schließen"><CrossIcon /></PlainButton>
      </NavigatorHead>
      <Tree>
        {tree.map((r, i) => (
          <TreeRow key={i} $indent={r.indent} $line={r.line} $selected={r.selected}>
            {!r.leaf && <Twisty><Caret open={!!r.open} /></Twisty>}
            {r.icon && <RowIcon>{r.icon}</RowIcon>}
            <span>{r.label}</span>
            {r.selected && <HiddenMark><FaEyeSlash size={20} /></HiddenMark>}
          </TreeRow>
        ))}
      </Tree>
      <NavigatorFoot><i /><i /><i /></NavigatorFoot>
    </Navigator>

    <ToTop aria-label="Nach oben"><Chevron w={28} dir="up" color="#aab2ba" stroke={5} /></ToTop>
  </Preview>
);

export default function App() {
  return (
    <Window>
      <Global />
      <BrowserChrome />
      <Workspace>
        <EditorPanel />
        <SitePreview />
      </Workspace>
    </Window>
  );
}
